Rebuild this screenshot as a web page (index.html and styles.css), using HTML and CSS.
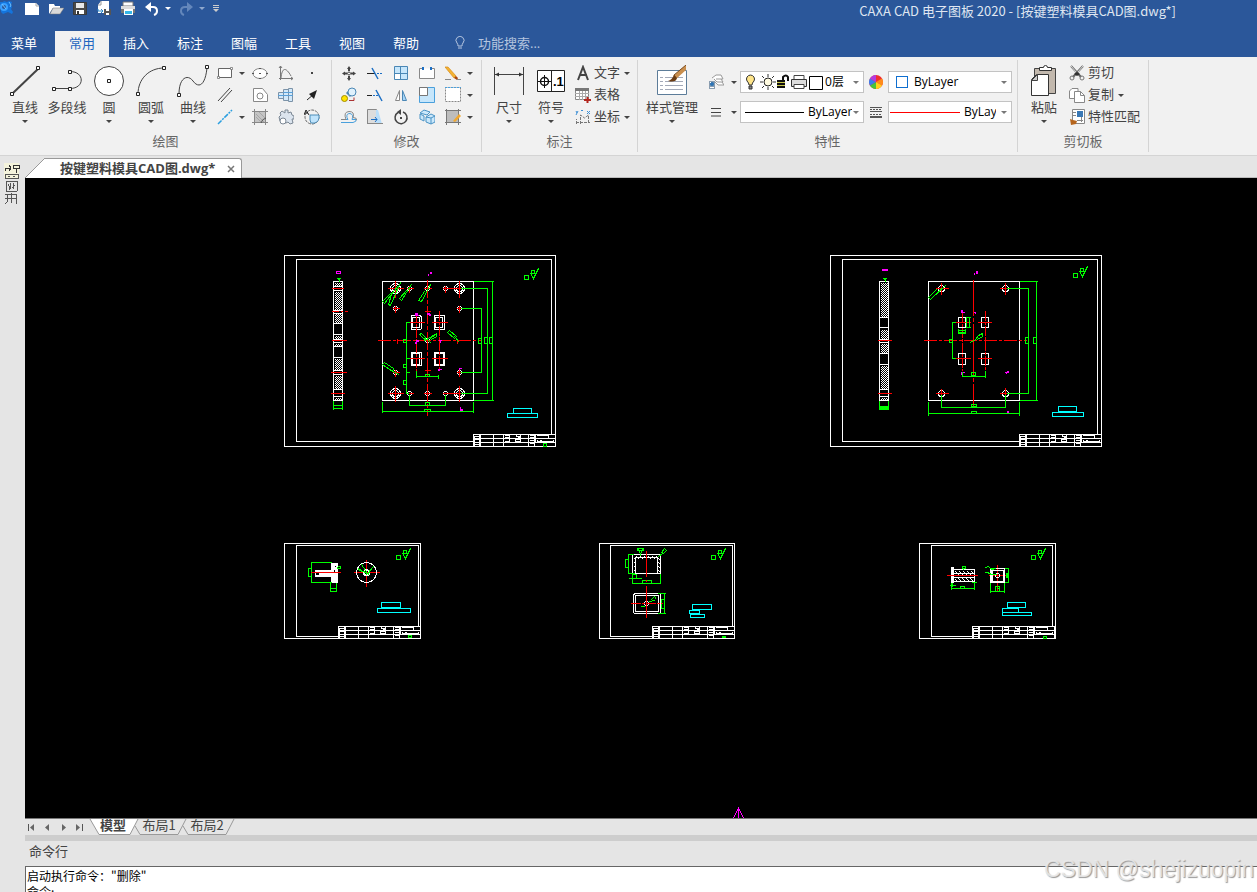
FILE: index.html
```html
<!DOCTYPE html>
<html lang="zh-CN">
<head>
    <meta charset="UTF-8">
    <meta name="viewport" content="width=device-width, initial-scale=1.0">
    <title>CAXA CAD 电子图板 2020</title>
    <link rel="stylesheet" href="styles.css">
</head>
<body>
    <svg class="defs" width="0" height="0" aria-hidden="true">
        <defs>
            <symbol id="caret" viewBox="0 0 8 8"><path d="M1 3h6L4 6z" fill="currentColor"/></symbol>
            <pattern id="hatch" width="2" height="2" patternUnits="userSpaceOnUse" patternTransform="translate(.5 .5)">
                <rect width="1" height="1" fill="#fff"/><rect x="1" y="1" width="1" height="1" fill="#fff"/>
            </pattern>
            <pattern id="hatch-wide" width="4" height="4" patternUnits="userSpaceOnUse" patternTransform="translate(.5 .5)">
                <path d="M0 0h2v1h1v1h1v1h-1v-1h-1v-1h-2zM0 3h1v1h-1z" fill="#fff"/>
            </pattern>
            <!-- title block shared by all sheets -->
            <g id="title-block">
                <rect class="w" width="82" height="12"/>
                <path class="w" d="M0 4h82M0 8h82M7 0v12M20 0v12M30 0v12M36 0v8M55 0v12M61 0v12M62 0v8M43 0v2h4v-2M42 5h5v2h-5zM64 5v2h16v-2M56 6h4"/>
                <path class="w" d="M1 1v11M6 0v12M1 2h5M1 5h5M1 10h5M31 1h5M31 3h5M31 7h5M56 1h4M56 3h4M56 9h4M63 1h12M75 0v4M66 6h2M44 3h3"/>
            </g>
            <g id="roughness" class="g">
                <path d="M0 6h4v4h-4zM7 1h3v3h-3zM6 4l3 5 5-10M7 4h5"/>
            </g>
        </defs>
    </svg>

    <header class="titlebar">
        <div class="quick-access">
            <svg class="app-logo" width="13" height="16" viewBox="0 0 13 16"><path d="M0 2h3l1-1 3 1 2-1 3 1-1 3 1 2-1 2 2 3-1 2-4-2-5 2-2-2z" fill="#1474dc"/><circle cx="4" cy="7" r="3" fill="#2b579a" stroke="#39a0ff" stroke-width="2"/><path d="M9 2l2 3-1 2M2 4l4 5" stroke="#6ec1ff" fill="none"/></svg>
            <button class="qa new" aria-label="新建"><svg width="16" height="16" viewBox="0 0 16 16"><path d="M1 3h11l3 3v9H1z" fill="#fff"/><path d="M12 3v3h3" fill="none" stroke="#aaa"/></svg></button>
            <button class="qa" aria-label="打开"><svg width="16" height="16" viewBox="0 0 16 16"><path d="M1 14V4h5l1 2h5v2H5z" fill="#fff"/><path d="M2 14l3-6h11l-4 6z" fill="#d9d9d9" stroke="#777" stroke-width=".5"/></svg></button>
            <button class="qa" aria-label="保存"><svg width="16" height="16" viewBox="0 0 16 16"><path d="M1.500 2.500h13v12h-13z" fill="#4a4a4a" stroke="#3a3a3a"/><path d="M4 3h8v5H4z" fill="#e8e8e8"/><path d="M4 10h8v4H4z" fill="#fff"/><path d="M5 11h2v3H5z" fill="#333"/></svg></button>
            <button class="qa" aria-label="另存为"><svg width="16" height="16" viewBox="0 0 16 16"><path d="M5 1h8v12H2V5z" fill="#fff"/><path d="M2 5h3V1" fill="none" stroke="#999"/><path d="M2 9v2h5M5 9l2 2-2 2" fill="none" stroke="#2a86c8"/><path d="M8 9h7v6H8z" fill="#555"/><path d="M10 9h3v2h-3zM10 13h3v2h-3z" fill="#fff"/></svg></button>
            <button class="qa" aria-label="打印"><svg width="16" height="16" viewBox="0 0 16 16"><path d="M3 2h10v4H3z" fill="#fff" stroke="#777"/><path d="M1 6h14v6H1z" fill="#ddd"/><path d="M1 9h14v4H1z" fill="#777"/><path d="M4 9h9v6H4z" fill="#fff"/><path d="M5 11h7v3H5z" fill="#35b6e8"/></svg></button>
            <button class="qa" aria-label="撤销"><svg width="16" height="16" viewBox="0 0 16 16"><path d="M4 7h5q4 0 4 4 0 3-3 4" fill="none" stroke="#fff" stroke-width="2"/><path d="M7 2v10L1 7z" fill="#fff"/></svg></button>
            <button class="qa-caret" aria-label="撤销列表"><svg width="8" height="8"><use href="#caret"/></svg></button>
            <button class="qa" aria-label="重做"><svg width="16" height="16" viewBox="0 0 16 16"><path d="M12 7H7q-4 0-4 4 0 3 3 4" fill="none" stroke="#6487bb" stroke-width="2"/><path d="M9 2v10l6-5z" fill="#6487bb"/></svg></button>
            <button class="qa-caret dim" aria-label="重做列表"><svg width="8" height="8"><use href="#caret"/></svg></button>
            <button class="qa-more" aria-label="自定义"><svg width="8" height="10" viewBox="0 0 8 10"><path d="M1 2.500h6M1 4.500h6" stroke="#ccc"/><path d="M1 6h6L4 9z" fill="#ccc"/></svg></button>
        </div>
        <div class="window-title">CAXA CAD 电子图板 2020 - [按键塑料模具CAD图.dwg*]</div>
    </header>

    <nav class="ribbon-tabs">
        <button class="ribbon-tab menu">菜单</button>
        <button class="ribbon-tab active">常用</button>
        <button class="ribbon-tab">插入</button>
        <button class="ribbon-tab">标注</button>
        <button class="ribbon-tab">图幅</button>
        <button class="ribbon-tab">工具</button>
        <button class="ribbon-tab">视图</button>
        <button class="ribbon-tab">帮助</button>
        <label class="search">
            <svg width="12" height="14" viewBox="0 0 12 14"><path d="M4 10Q4 8 3 7a4 4 0 1 1 6 0Q8 8 8 10zM4 12h4" fill="none" stroke="#b5c5df"/></svg>
            <input type="text" placeholder="功能搜索..." aria-label="功能搜索">
        </label>
    </nav>

    <div class="ribbon">
        <section class="group">
            <div class="group-body">
                <div class="large-row draw-row">
                    <button class="large"><svg width="32" height="32" viewBox="0 0 32 32"><path d="M4 28L29 4" class="ln2"/><path d="M1.500 27.500h3v3h-3zM27.500 1.500h3v3h-3z" class="node"/></svg><span>直线</span><svg class="caret" width="8" height="8"><use href="#caret"/></svg></button>
                    <button class="large"><svg width="32" height="32" viewBox="0 0 32 32"><path d="M3 23.500h15M19 6.500c15 0 15 17 0 17" class="ln"/><path d="M1.500 22.500h3v3h-3zM17.500 22.500h3v3h-3zM17.500 5.500h3v3h-3z" class="node"/></svg><span>多段线</span></button>
                    <button class="large"><svg width="32" height="32" viewBox="0 0 32 32"><circle cx="16" cy="16" r="14.500" fill="#fff" stroke="#444"/><path d="M14.500 14.500h3v3h-3z" class="node"/></svg><span>圆</span><svg class="caret" width="8" height="8"><use href="#caret"/></svg></button>
                    <button class="large"><svg width="32" height="32" viewBox="0 0 32 32"><path d="M3 29C3 14 14 3 29 3" class="ln"/><path d="M1.500 27.500h3v3h-3zM27.500 1.500h3v3h-3z" class="node"/></svg><span>圆弧</span><svg class="caret" width="8" height="8"><use href="#caret"/></svg></button>
                    <button class="large"><svg width="32" height="32" viewBox="0 0 32 32"><path d="M2 29C2 12 11 9 16 16S28 22 30 3" class="ln"/><path d="M.500 28.500h3v3h-3zM28.500.500h3v3h-3z" class="node"/></svg><span>曲线</span><svg class="caret" width="8" height="8"><use href="#caret"/></svg></button>
                </div>
                <div class="tools draw-tools">
                    <button class="tool" aria-label="矩形"><svg width="16" height="16" viewBox="0 0 16 16"><path d="M1.500 3.500h13v9h-13z" fill="#fff" stroke="#666"/><path d="M.500 11.500h2v2h-2zM13.500 2.500h2v2h-2z" fill="#fff" stroke="#666" stroke-width=".7"/></svg><svg class="caret" width="8" height="8"><use href="#caret"/></svg></button>
                    <button class="tool" aria-label="椭圆"><svg width="16" height="16" viewBox="0 0 16 16"><ellipse cx="8" cy="8.500" rx="7" ry="5" fill="#fff" stroke="#888"/><path d="M7 8h2v1H7zM0 8h2v1H0zM14 8h2v1h-2zM7 3h2v1H7zM7 13h2v1H7z" fill="#555"/></svg></button>
                    <button class="tool" aria-label="公式曲线"><svg width="16" height="16" viewBox="0 0 16 16"><path d="M2.500 1v14M1 13.500h14M1 3l1.500-2L4 3M13 12l2 1.500-2 1.500M3 13C4 2 8 2 13 11" fill="none" stroke="#777"/></svg></button>
                    <button class="tool" aria-label="点"><svg width="16" height="16" viewBox="0 0 16 16"><path d="M7 7h2v2H7z" fill="#444"/></svg></button>
                    <button class="tool" aria-label="平行线"><svg width="16" height="16" viewBox="0 0 16 16"><path d="M1 14L13 1M4 15L15 3" fill="none" stroke="#444"/></svg></button>
                    <button class="tool" aria-label="孔"><svg width="16" height="16" viewBox="0 0 16 16"><path d="M1.500 1.500h9l5 6v7h-14z" fill="#fff" stroke="#888"/><circle cx="8" cy="9" r="3" fill="none" stroke="#888"/></svg></button>
                    <button class="tool" aria-label="轴"><svg width="16" height="16" viewBox="0 0 16 16"><path d="M.500 5.500h5v6h-5zM5.500 2.500h5v11h-5zM10.500 1.500h4v13h-4z" fill="#d3e9fa" stroke="#7c93a8"/><path d="M0 8.500h15M5 5.500h10" stroke="#5aa0d8"/></svg></button>
                    <button class="tool" aria-label="箭头"><svg width="16" height="16" viewBox="0 0 16 16"><path d="M3 13L10 7" stroke="#222"/><path d="M13 3l-8 4 5 5z" fill="#222"/></svg></button>
                    <button class="tool" aria-label="中心线"><svg width="16" height="16" viewBox="0 0 16 16"><path d="M1 15L15 1" stroke="#2b9fe0" stroke-width="1.500" stroke-dasharray="5 1 2 1"/></svg><svg class="caret" width="8" height="8"><use href="#caret"/></svg></button>
                    <button class="tool" aria-label="填充"><svg width="16" height="16" viewBox="0 0 16 16"><path d="M3 3h11v11H3z" fill="#c4c4c4"/><path d="M2.500 0v16M13.500 0v16M0 2.500h16M0 13.500h16" fill="none" stroke="#888"/><path d="M4 8l5 5M4 5l8 8M7 3l6 6" stroke="#999" stroke-width=".7"/><path d="M9 14q1-4 5-5" fill="none" stroke="#555"/></svg></button>
                    <button class="tool" aria-label="齿轮"><svg width="16" height="16" viewBox="0 0 16 16"><path d="M2 4l2-2 3 2V1h3v3l3-1 1 3 2 1v3h-2l1 4-3 1-2-2-2 1-6-2-1-4 2-2z" fill="#dbe4ee" stroke="#7b8794"/><circle cx="5" cy="12" r="3" fill="#fff" stroke="#7b8794"/></svg></button>
                    <button class="tool" aria-label="局部放大"><svg width="16" height="16" viewBox="0 0 16 16"><circle cx="8" cy="8" r="7" fill="none" stroke="#666" stroke-dasharray="3 1"/><path d="M6 6h9v3q-1 6-8 5l-1-3z" fill="#bfe3fb" stroke="#4d8db8"/><path d="M0 6l2-5 3 5M1 4h3" fill="none" stroke="#222"/></svg></button>
                </div>
            </div>
            <div class="group-label">绘图</div>
        </section>

        <section class="group">
            <div class="group-body">
                <div class="tools modify-tools">
                    <button class="tool" aria-label="平移"><svg width="16" height="16" viewBox="0 0 16 16"><path d="M8 1l2 3H9v2H7V4H6zM8 16l-2-3h1v-2h2v2h1zM1 8.500l3-2v1h2v2H4v1zM15 8.500l-3 2v-1h-2v-2h2v-1z" fill="#444"/><circle cx="8" cy="8.500" r="1.500" fill="none" stroke="#444"/></svg></button>
                    <button class="tool" aria-label="裁剪"><svg width="16" height="16" viewBox="0 0 16 16"><path d="M0 8.500h8" stroke="#222"/><path d="M5 3l6 11" stroke="#1c6fc4" stroke-width="1.500"/><path d="M10 8.500h6" stroke="#1c6fc4" stroke-dasharray="2 1"/></svg></button>
                    <button class="tool" aria-label="阵列"><svg width="16" height="16" viewBox="0 0 16 16"><path d="M1.500 1.500h13v13h-13z" fill="#c6e6fb" stroke="#4a87b5"/><path d="M2 9h5v5H2z" fill="#fff"/><path d="M7.500 1v14M1 8.500h14" stroke="#4a87b5"/></svg></button>
                    <button class="tool" aria-label="打断"><svg width="16" height="16" viewBox="0 0 16 16"><path d="M4 3.500H.500v10h15v-10H12" fill="#fff" stroke="#888"/><path d="M3 2h2v3H3zM11 2h2v3h-2z" fill="#1c6fc4"/></svg></button>
                    <button class="tool" aria-label="删除"><svg width="16" height="16" viewBox="0 0 16 16"><path d="M0 2h3l8 9-2 2z" fill="#f5b433" stroke="#d58a17" stroke-width=".7"/><path d="M9 13l2-2 2 2-1 2z" fill="#a9480f"/><path d="M0 14.500h6M12 14.500h4" stroke="#888"/></svg><svg class="caret" width="8" height="8"><use href="#caret"/></svg></button>
                    <button class="tool" aria-label="平移复制"><svg width="16" height="16" viewBox="0 0 16 16"><path d="M6 5l4 4" stroke="#4a87b5" stroke-width="3"/><circle cx="11" cy="5" r="4" fill="#dff1fc" stroke="#4a87b5"/><circle cx="3.500" cy="11.500" r="3" fill="#ffe400" stroke="#a08a00"/><path d="M8 13.500h5v-3" fill="none" stroke="#a33" /></svg></button>
                    <button class="tool" aria-label="延伸"><svg width="16" height="16" viewBox="0 0 16 16"><path d="M0 8.500h5" stroke="#222"/><path d="M6 8.500h6" stroke="#1c6fc4" stroke-dasharray="2 1"/><path d="M9 3l6 11" stroke="#1c6fc4" stroke-width="1.500"/></svg></button>
                    <button class="tool" aria-label="镜像"><svg width="16" height="16" viewBox="0 0 16 16"><path d="M6.500 3.500v10h-4z" fill="#fff" stroke="#888"/><path d="M9.500 3.500v10h4z" fill="#a7d5f7" stroke="#4a87b5"/></svg></button>
                    <button class="tool" aria-label="缩放"><svg width="16" height="16" viewBox="0 0 16 16"><path d="M.500.500h15v15H.500z" fill="#c6e6fb" stroke="#4aa0dc"/><path d="M.500.500h8v8h-8z" fill="#fff" stroke="#777"/></svg></button>
                    <button class="tool" aria-label="拉伸"><svg width="16" height="16" viewBox="0 0 16 16"><path d="M.500.500h15v14H.500z" fill="#fff" stroke="#888" stroke-dasharray="2 1"/><path d="M0 .500h16" stroke="#4aa0dc" stroke-dasharray="2 1"/></svg><svg class="caret" width="8" height="8"><use href="#caret"/></svg></button>
                    <button class="tool" aria-label="等距线"><svg width="16" height="16" viewBox="0 0 16 16"><path d="M0 13.500h12q4-1 3-3h-4q2-5-2-6-4 0-3 4l1 2H1" fill="none" stroke="#4aa0dc"/><path d="M0 10.500h5Q2 3 8 2.500q6 0 4 6 4 0 4 3" fill="none" stroke="#888"/></svg></button>
                    <button class="tool" aria-label="过渡"><svg width="16" height="16" viewBox="0 0 16 16"><path d="M.500.500h9v14h-9z" fill="#ddd" stroke="#888"/><path d="M9 1h2l4 14H9z" fill="#b9defa"/><path d="M4 10.500h6M8 8l2 2.500L8 13" fill="none" stroke="#1c6fc4"/><path d="M0 14.500h16" stroke="#888"/></svg></button>
                    <button class="tool" aria-label="旋转"><svg width="16" height="16" viewBox="0 0 16 16"><path d="M5 3.500A6 6 0 1 0 10 3" fill="none" stroke="#444" stroke-width="1.500"/><path d="M8 0v6L4 3z" fill="#444"/><path d="M7 8h2v2H7z" fill="#444"/></svg></button>
                    <button class="tool" aria-label="分解"><svg width="16" height="16" viewBox="0 0 16 16"><path d="M1 4l4-3 6 2-3 3zM1 5l4 2v5l-4-2zM7 8l5-3 4 2v6l-4 2-5-2z" fill="#cbe8fb" stroke="#4a93c5"/><path d="M12 9v6M7 8l5 1 4-2" fill="none" stroke="#4a93c5"/></svg></button>
                    <button class="tool" aria-label="编辑填充"><svg width="16" height="16" viewBox="0 0 16 16"><path d="M2 2h11v11H2z" fill="#bdbdbd"/><path d="M1.500 0v16M13.500 0v16M0 1.500h16M0 13.500h16" stroke="#777"/><path d="M8 12l6-7 2 2-6 6z" fill="#f0a830"/></svg><svg class="caret" width="8" height="8"><use href="#caret"/></svg></button>
                </div>
            </div>
            <div class="group-label">修改</div>
        </section>

        <section class="group">
            <div class="group-body">
                <div class="large-row annot-row">
                    <button class="large"><svg width="32" height="32" viewBox="0 0 32 32"><path d="M1.500 2v28M30.500 2v28M2 9.500h28" class="ln"/><path d="M2 9.500l4-2v4zM30 9.500l-4-2v4z" fill="#333"/></svg><span>尺寸</span><svg class="caret" width="8" height="8"><use href="#caret"/></svg></button>
                    <button class="large"><svg width="32" height="32" viewBox="0 0 32 32"><path d="M2.500 5.500h27v21h-27zM16.500 5v21" fill="#fff" stroke="#222"/><circle cx="9.500" cy="16.500" r="4" fill="none" stroke="#111" stroke-width="1.500"/><path d="M3 16.500h13M9.500 10v13" stroke="#111"/><text x="18" y="21" class="tol">.1</text></svg><span>符号</span><svg class="caret" width="8" height="8"><use href="#caret"/></svg></button>
                </div>
                <div class="small-list annot-list">
                    <button class="small"><svg width="16" height="16" viewBox="0 0 16 16"><path d="M3 15L8 2l5 13M5 10h7" fill="none" stroke="#444" stroke-width="2"/></svg><span>文字</span><svg class="caret" width="8" height="8"><use href="#caret"/></svg></button>
                    <button class="small"><svg width="16" height="16" viewBox="0 0 16 16"><path d="M.500 1.500h13v11H.500z" fill="#fff" stroke="#888"/><path d="M0 1h14v3H0z" fill="#777"/><path d="M4.500 4v9M7.500 4v9M10.500 4v9M0 6.500h14M0 9.500h14" stroke="#aaa"/><path d="M9 13h7M12.500 10v6" stroke="#b3261e" stroke-width="2"/></svg><span>表格</span></button>
                    <button class="small"><svg width="16" height="16" viewBox="0 0 16 16"><path d="M5.500 15V6l4 3 4-3v9M1.500 15v-5M1 13.500h14" fill="none" stroke="#777" stroke-dasharray="3 1"/><path d="M1 2l1 2M3 2L1 6M6 1.500h2M12 2l3 3M15 2l-3 3" stroke="#3c8fd6"/></svg><span>坐标</span><svg class="caret" width="8" height="8"><use href="#caret"/></svg></button>
                </div>
            </div>
            <div class="group-label">标注</div>
        </section>

        <section class="group">
            <div class="group-body">
                <div class="large-row style-row">
                    <button class="large"><svg width="32" height="32" viewBox="0 0 32 32"><path d="M1.500 5.500h29v24h-29z" fill="#fff" stroke="#5c7c99"/><path d="M4 12.500h3M4 16.500h3M4 20.500h3M4 24.500h3M9 12.500h18M9 16.500h18M9 20.500h18M9 24.500h18" stroke="#a3a9b8"/><path d="M30 0v5L20 14l-3-3z" fill="#c98f4e"/><path d="M30 0L18 10l2 3" fill="none" stroke="#7a4a1d"/><path d="M18 10l3 3q-1 5-9 3 4-1 6-6z" fill="#6b3d14"/></svg><span>样式管理</span><svg class="caret" width="8" height="8"><use href="#caret"/></svg></button>
                </div>
                <div class="props">
                    <div class="prop-row">
                        <button class="tool layer" aria-label="图层"><svg width="16" height="16" viewBox="0 0 16 16"><path d="M4 4l4-3h5l2 4H8M6 5l3 3h6l-2-3M7 8l3 3h6l-2-3" fill="#fff" stroke="#999"/><path d="M1 7h6v8H1z" fill="#8a9db0"/><circle cx="4" cy="10" r="2" fill="#2d74b5"/><path d="M2 13.500h4M2 8.500h1" stroke="#fff"/></svg><svg class="caret" width="8" height="8"><use href="#caret"/></svg></button>
                        <div class="combo">
                            <svg width="84" height="18" viewBox="0 0 84 18">
                                <path d="M8 12q0-2-2-4a4 4 0 1 1 7 0q-2 2-2 4z" fill="#ffe58a" stroke="#333"/><path d="M8 13h3v3H8z" fill="#888" stroke="#333"/>
                                <circle cx="27" cy="9" r="4" fill="#fffbe0" stroke="#222"/><path d="M27 1v3M27 14v3M19 9h3M32 9h3M21 3l2 2M31 13l2 2M21 15l2-2M31 5l2-2" stroke="#333"/>
                                <path d="M42 8V4q3-3 5 0v4" fill="none" stroke="#111" stroke-width="2"/><path d="M36 7h8v8h-8z" fill="#111"/><path d="M36 9.500h8M36 12.500h8" stroke="#c9c94b"/>
                                <path d="M53 2.500h10v6H53z" fill="#fff" stroke="#444"/><path d="M50.500 6.500h15v7h-15z" fill="#ddd" stroke="#333"/><path d="M53 11.500h10v4H53z" fill="#fff" stroke="#444"/>
                                <path d="M68.500 3.500h13v13h-13z" fill="#fff" stroke="#000"/>
                            </svg>
                            <select aria-label="图层"><option>0层</option></select>
                            <svg class="caret" width="8" height="8"><use href="#caret"/></svg>
                        </div>
                        <button class="tool between" aria-label="颜色"><svg width="14" height="14" viewBox="0 0 14 14"><circle cx="7" cy="7" r="7" fill="#f03030"/><path d="M7 7l6-3.500a7 7 0 0 1 0 7z" fill="#ff8c1a"/><path d="M7 7l6 3.500A7 7 0 0 1 7 14z" fill="#ffd21a"/><path d="M7 7v7a7 7 0 0 1-6-3.500z" fill="#45c43c"/><path d="M7 7l-6 3.500a7 7 0 0 1 0-7z" fill="#3a7df0"/><path d="M7 7L1 3.500A7 7 0 0 1 7 0z" fill="#b43be0"/></svg></button>
                        <div class="combo">
                            <span class="swatch"></span>
                            <select aria-label="颜色"><option>ByLayer</option></select>
                            <svg class="caret" width="8" height="8"><use href="#caret"/></svg>
                        </div>
                    </div>
                    <div class="prop-row">
                        <button class="tool layer" aria-label="线宽"><svg width="16" height="16" viewBox="0 0 16 16"><path d="M3 4.500h10M3 8.500h10M3 12h10" stroke="#444"/></svg><svg class="caret" width="8" height="8"><use href="#caret"/></svg></button>
                        <div class="combo">
                            <span class="weight-line"></span>
                            <select aria-label="线宽"><option>ByLayer</option></select>
                            <svg class="caret" width="8" height="8"><use href="#caret"/></svg>
                        </div>
                        <button class="tool between" aria-label="线型"><svg width="14" height="14" viewBox="0 0 14 14"><path d="M1 2.500h12M1 6.500h12" stroke="#555"/><path d="M1 4.500h12M1 9.500h12" stroke="#555" stroke-dasharray="2 1"/><path d="M1 12h12" stroke="#555" stroke-width="2"/></svg></button>
                        <div class="combo">
                            <span class="type-line"></span>
                            <select class="narrow" aria-label="线型"><option>ByLayer</option></select>
                            <svg class="caret" width="8" height="8"><use href="#caret"/></svg>
                        </div>
                    </div>
                </div>
            </div>
            <div class="group-label">特性</div>
        </section>

        <section class="group">
            <div class="group-body">
                <div class="large-row paste-row">
                    <button class="large"><svg width="32" height="32" viewBox="0 0 32 32"><path d="M6.500 3.500h21v25h-21z" fill="#c2b8ad" stroke="#444"/><path d="M11.500 5.500v-3h4q0-2 2-2t2 2h4v3z" fill="#fff" stroke="#333"/><path d="M8.500 9.500h12v21h-17v-16z" fill="#fff" stroke="#333"/><path d="M9.500 9.500v6h-6z" fill="#ccc" stroke="#444"/></svg><span>粘贴</span><svg class="caret" width="8" height="8"><use href="#caret"/></svg></button>
                </div>
                <div class="small-list">
                    <button class="small"><svg width="16" height="16" viewBox="0 0 16 16"><path d="M2 1l10 11M14 1L4 12" stroke="#666" stroke-width="2"/><path d="M2 1l5 6M14 1L9 7" stroke="#ddd"/><path d="M5 9l3-2 3 2-3 2z" fill="#333"/><circle cx="3" cy="13" r="2" fill="none" stroke="#777"/><circle cx="13" cy="13" r="2" fill="none" stroke="#777"/></svg><span>剪切</span></button>
                    <button class="small"><svg width="16" height="16" viewBox="0 0 16 16"><path d="M3 1.500h6v10H.500V4z" fill="#fff" stroke="#888"/><path d="M5.500 4.500h6l4 4v7h-10z" fill="#fff" stroke="#888"/><path d="M11.500 4.500v4h4" fill="none" stroke="#888"/></svg><span>复制</span><svg class="caret" width="8" height="8"><use href="#caret"/></svg></button>
                    <button class="small"><svg width="16" height="16" viewBox="0 0 16 16"><path d="M3.500.500h12v14h-12z" fill="#fff" stroke="#888"/><path d="M8 2h6v6H8z" fill="#3a78b5"/><path d="M4 3.500h3M4 6.500h3M8 11.500h6M12.500 8v5" stroke="#888"/><path d="M1 10l3 1 4 1-1 3-5 1z" fill="#b5651d"/></svg><span>特性匹配</span></button>
                </div>
            </div>
            <div class="group-label">剪切板</div>
        </section>
    </div>

    <div class="workspace">
        <aside class="side-panel">
            <svg width="16" height="42" viewBox="0 0 16 42" shape-rendering="crispEdges"><path d="M0 0h15v15H0z" fill="#f4f3dc"/><path d="M1 8V5h5M5 2l2 3-2 3M9 2h6v3H9zM12 5v5" fill="none" stroke="#333"/><path d="M1 11h13v4H1zM4 13h2M9 13h2" fill="none" stroke="#555"/><path d="M2 18v10M13 18v10M2 18h11M2 28h11M4 21l3 5M7 20l-2 7M9 20v6M11 22l-3 3" fill="none" stroke="#555"/><path d="M1 31h12M1 35h12M3 31v8l-2 2M7 30v10M12 31v10" fill="none" stroke="#555"/></svg>
        </aside>
        <main class="document">
            <div class="doc-tabs">
                <svg class="slant" width="20" height="20" viewBox="0 0 20 20"><path d="M0 20L19.500 0H20v20z" fill="#fff"/><path d="M0 20L20 0" stroke="#999"/></svg>
                <div class="doc-tab">
                    <span>按键塑料模具CAD图.dwg*</span>
                    <button class="close" aria-label="关闭"><svg width="8" height="8" viewBox="0 0 8 8"><path d="M1 1l6 6M7 1L1 7" stroke="#777" stroke-width="1.500"/></svg></button>
                </div>
            </div>

            <div class="canvas">
                <svg class="drawing" width="100%" height="100%" shape-rendering="crispEdges">
                    <!-- sheet 1: cavity plate -->
                    <g transform="translate(255.500 72.500)">
                        <rect class="w" x="4" y="5" width="271" height="191"/>
                        <path class="w" d="M193 191H16V9h255v175"/>
                        <use href="#title-block" x="193" y="184"/>
                        <path class="g" d="M263 193h3v3h-3z"/>
                        <use href="#roughness" x="244" y="19"/>
                        <path class="hatch" d="M54 32h8v4h-8zM54 41h8v18h-8zM54 63h8v10h-8zM54 85h8v3h-8zM54 93h8v3h-8zM54 108h8v12h-8zM54 125h8v14h-8zM54 147h8v3h-8z"/>
                        <path class="w" d="M53 31h9v119h-9zM53 36h9M53 40h9M53 60h9M53 63h9M53 73h9M53 84h9M53 89h9M53 92h9M53 96h9M53 107h9M53 120h9M53 124h9M53 139h9M53 146h9"/>
                        <path class="g" d="M53 150v9M62 150v9M53 155h9M53 158h9M56 28h4M57 29h2v2"/>
                        <path class="r" d="M51 38h12M51 61h7m2 0h2m2 0h3M51 90h15M50 122h16M50 143h14"/>
                        <path class="m" d="M56 21h4v2h-4z"/>
                        <rect class="w" x="102" y="31" width="91" height="119"/>
                        <g class="w">
                            <circle cx="115" cy="38" r="5"/><circle cx="115" cy="38" r="3"/><circle cx="179" cy="38" r="5"/><circle cx="179" cy="38" r="3"/>
                            <circle cx="115" cy="143" r="5"/><circle cx="115" cy="143" r="3"/><circle cx="179" cy="143" r="5"/><circle cx="179" cy="143" r="3"/>
                            <circle cx="129" cy="38" r="2"/><circle cx="147" cy="38" r="2"/><circle cx="165" cy="38" r="2"/>
                            <circle cx="129" cy="143" r="2"/><circle cx="147" cy="143" r="2"/><circle cx="165" cy="143" r="2"/>
                            <circle cx="115" cy="58" r="2"/><circle cx="179" cy="58" r="2"/><circle cx="115" cy="122" r="2"/><circle cx="179" cy="122" r="2"/><circle cx="147" cy="90" r="2"/>
                            <path d="M131 65h9l1 2v11l-1 1h-9zM132 67h7v10h-7zM154 65h10v14h-10zM155 67h7v10h-7zM131 102h10v13h-10zM132 103h7v11h-7zM154 102h10v13h-10zM155 103h8v11h-8z"/>
                        </g>
                        <g class="r">
                            <path d="M147 29v136" stroke-dasharray="18 2 4 2"/><path d="M97 90h103" stroke-dasharray="13 2 3 2"/>
                            <path d="M136 62v58M159 60v60" stroke-dasharray="10 1 3 1"/>
                            <path d="M129 72h15M151 72h16M129 108h15M151 108h16"/>
                            <path d="M107 38h16M115 30v17M126 38h7M129 35v7M143 38h8M162 38h16M165 35v7M172 38h15M179 30v17M112 58h7M115 55v7M176 58h7M179 55v7M112 122h7M115 119v7M176 122h7M179 119v7M107 143h16M115 135v16M126 143h7M143 143h8M162 143h25M179 135v16M144 61h6M144 120h6M117 88v5M177 88v5"/>
                        </g>
                        <g class="g">
                            <path d="M193 31h20M212 31v119M193 150h20M180 38h27v105h-27M180 58h21v64h-21M198 88h3v5h-3zM204 87h3v6h-3zM209 87h3v6h-3z"/>
                            <path d="M126 72v71M125 72h4M125 108h4M125 122h4M125 143h3M123 89h3v3h-3zM123 114h3v3h-3zM123 130h3v4h-3z"/>
                            <path d="M136 120v7M136 126h22M158 124v4M145 124h4v2h-4zM129 144v11h36v-11M145 152h4v3h-4zM102 151v11M102 161h91M193 151v11M144 159h6v2h-6z"/>
                            <path d="M120 32l-10 23-2-1 3-10M117 36l-13 17-2-2 8-8M131 34l-10 16-2-2 7-8M150 34l-9 17-3-1 6-9M102 114l2-2 9 6-1 3zM112 121l7 3M139 84l2-1 4 4-1 2zM144 90l4-2 8-5M150 88l6-5v3l-5 3M147 89l4 4M167 82l2-2 7 6-2 2zM174 86l5 6"/>
                        </g>
                        <path class="mf" d="M149 21h2v2h-2zM147 23h1v2h-1zM134 62h3v2h1v1h-4zM146 62h3v1h1v2h-2v-1h-2zM134 91h2v2h-2zM135 89h3v2h-3zM158 89h3v1h-1v2h-1v-2h-1zM157 118h4v1h-2v1h-2zM178 117h3v1h-2v1h-1zM179 156h1v2h2v2h-3z"/>
                        <path class="c" d="M233 158h18v5h-18zM227 163h30v4h-30z"/>
                    </g>

                    <!-- sheet 2: backing plate -->
                    <g transform="translate(801.500 72.500)">
                        <rect class="w" x="4" y="5" width="271" height="191"/>
                        <path class="w" d="M193 191H16V9h255v175"/>
                        <use href="#title-block" x="193" y="184"/>
                        <use href="#roughness" x="247" y="17"/>
                        <path class="hatch" d="M54 32h8v35h-8zM54 79h8v10h-8zM54 93h8v10h-8zM54 115h8v23h-8zM54 147h8v3h-8z"/>
                        <path class="w" d="M53 31h9v119h-9zM53 67h9M53 77h9M53 89h9M53 92h9M53 103h9M53 114h9M53 139h9M53 146h9"/>
                        <path class="g" d="M53 150v9h9v-9M53 156h9v1h-9zM53 158h9M56 28h4M57 29h2v2"/>
                        <path class="r" d="M51 90h14M51 143h14"/>
                        <path class="mf" d="M55 18h6v2h-6zM149 20h2v3h-2zM147 22h1v2h-1zM134 59h2v2h2v1h-4zM146 60h1v1h2v2h-1v-1h-2zM134 121h4v1h-2v2h-2zM178 121h2v-1h2v2h-2v1h-1v-1h-1zM180 160h2v3h-2z"/>
                        <rect class="w" x="102" y="31" width="91" height="119"/>
                        <g class="w">
                            <circle cx="115" cy="38" r="3"/><circle cx="179" cy="38" r="3"/><circle cx="115" cy="143" r="3"/><circle cx="179" cy="143" r="3"/>
                            <path d="M132 67h7v10h-7zM155 67h7v10h-7zM132 103h7v11h-7zM155 103h7v11h-7z"/>
                        </g>
                        <g class="r">
                            <path d="M147 29v60M147 89v68" stroke-dasharray="36 2 4 2"/><path d="M97 90h103" stroke-dasharray="13 2 3 2"/>
                            <path d="M136 62v58M159 60v60" stroke-dasharray="10 1 3 1"/>
                            <path d="M129 72h15M151 72h14M129 108h15M151 108h14M109 38h13M115 32v12M173 38h13M179 32v12M109 143h13M115 138v10M173 143h13M179 137v12"/>
                        </g>
                        <g class="g">
                            <path d="M193 31h18M210 31v119M193 150h18M180 38h22v105h-22M199 87h3v6h-3zM207 87h3v6h-3z"/>
                            <path d="M125 72h4M126 72v36M125 108h4M123 89h3v3h-3zM132 78v5h7v-5M132 80h7M132 82h7M140 67h3v10h-3zM139 67h5M139 77h5"/>
                            <path d="M136 121v5h22M159 120v7M145 122h4v3h-4zM115 144v13h64v-13M145 154h5v2h-5zM102 151v14M102 163h91M193 151v14M145 161h5v2h-5z"/>
                            <path d="M120 34l-16 15-2-2 8-8M144 92l5-3 3-4 4-2v3l-5 3"/>
                        </g>
                        <path class="c" d="M232 156h18v5h-18zM226 162h31v4h-31z"/>
                    </g>

                    <!-- sheet 3: sprue bush -->
                    <g transform="translate(255.500 362.500)">
                        <rect class="w" x="4" y="3" width="136" height="95"/>
                        <path class="w" d="M58 96H16V5h122v81"/>
                        <use href="#title-block" x="58" y="86"/>
                        <path class="g" d="M128 95h3v2h-3z"/>
                        <use href="#roughness" x="116" y="9"/>
                        <path class="wf" d="M50 22h7v20h-7zM34 29h16v7H34z"/>
                        <path fill="#000" d="M35 31h3v3h-3zM53 29h1v2h-1zM54 25h1v1h-1z"/>
                        <path class="g" d="M51 22H31v20h20M28 28h3v8h-3zM50 42v9h6v-9M50 48h6M56 29l2-3h2v2h-4"/>
                        <path class="r" d="M30 32h30M73 32h26M86 19v27"/>
                        <circle class="w" cx="86" cy="32" r="10"/><circle class="w" cx="86" cy="32" r="3"/><circle class="w" cx="86" cy="32" r="2"/>
                        <path class="g" d="M78 29l4 2-4-3zM81 24l6 9 6-7M83 31l6 3M86 34l4-3"/>
                        <path class="c" d="M101 62h19v5h-19zM97 68h33v4H97z"/>
                    </g>

                    <!-- sheet 4: key cap -->
                    <g transform="translate(570.500 362.500)">
                        <rect class="w" x="4" y="3" width="135" height="95"/>
                        <path class="w" d="M57 96H15V5h122v81"/>
                        <use href="#title-block" x="57" y="86"/>
                        <path class="g" d="M127 96h3v1h-3z"/>
                        <use href="#roughness" x="116" y="9"/>
                        <path class="hatch-wide" d="M38 15h27v3H40v15h-2zM62 18h3v15h-3z"/>
                        <path class="w" d="M37 14h28v19h-28zM40 17h22v16h-22zM38 54l2-1h24l1 1v18l-1 1H39l-1-1zM40 55h23v16H40z"/>
                        <path class="g" d="M32 14h6M33 14v19h6M30 19h3v8h-3zM37 33v10h28v-10M47 40h9v3h-9zM42 8h6v2h-6zM43 9l2 5 2-5M63 16l4-3M66 12l3-4 2 2-3 3zM33 38h13M37 34h4v4"/>
                        <path class="g" d="M62 53h8M69 53v20M62 73h8M66 59h3v9h-3zM45 66h4l5-5 6-1M55 60l4-4 2 3"/>
                        <circle class="w" cx="51" cy="63" r="2"/>
                        <path class="r" d="M51 10v26m0 3v2m0 4v32" /><path class="r" d="M35 63h32" stroke-dasharray="10 1 3 1"/>
                        <path class="c" d="M97 64h19v5H97zM94 70h10v3H94zM95 74h14v3H95z"/>
                    </g>

                    <!-- sheet 5: insert -->
                    <g transform="translate(890.500 362.500)">
                        <rect class="w" x="4" y="3" width="136" height="95"/>
                        <path class="w" d="M57 96H16V5h121v81"/>
                        <use href="#title-block" x="57" y="86"/>
                        <path class="g" d="M128 96h3v2h-3z"/>
                        <use href="#roughness" x="116" y="9"/>
                        <path class="hatch-wide" d="M39 30h20v4H39zM39 36h20v5H39z"/>
                        <path class="w" d="M36 27h2v15h-2zM37 27v15M38 29h21v12H38zM38 33h20M38 37h20"/>
                        <path class="r" d="M31 35h31M73 35h19M82 24v27"/>
                        <path class="g" d="M36 42v7M36 48h23M59 41v8M45 46h4v2h-4zM47 26h3v2h-3zM48 27v2M34 45h6M37 42v4M56 42h5"/>
                        <path class="w" d="M75 28h14v14H75zM77 30h11v11H77zM76 28v14"/><circle class="w" cx="82" cy="35" r="2"/>
                        <path class="g" d="M75 42v10M75 51h14M89 42v10M80 46h4v5h-4zM81 48h3M89 28h4v14h-4M91 33h1v4h-1zM69 32h3l4 2h5M70 27l3-1 3 3h2M75 28h5"/>
                        <path class="c" d="M92 62h18v5H92zM87 68h16v4H87zM87 72h29v3H87z"/>
                    </g>

                    <!-- origin mark -->
                    <path class="m" d="M713.500 631v9M708.500 640l5-10 5 10"/>
                </svg>
            </div>

            <div class="layout-bar">
                <div class="layout-nav">
                    <button aria-label="首个"><svg width="8" height="8" viewBox="0 0 8 8"><path d="M1.500 1v7" stroke="#555"/><path d="M7 1v7L3 4.500z" fill="#666"/></svg></button>
                    <button aria-label="上一个"><svg width="8" height="8" viewBox="0 0 8 8"><path d="M6 1v7L2 4.500z" fill="#666"/></svg></button>
                    <button aria-label="下一个"><svg width="8" height="8" viewBox="0 0 8 8"><path d="M3 1v7l4-3.500z" fill="#666"/></svg></button>
                    <button aria-label="末个"><svg width="8" height="8" viewBox="0 0 8 8"><path d="M1 1v7l4-3.500z" fill="#666"/><path d="M7.500 1v7" stroke="#555"/></svg></button>
                </div>
                <button class="layout-tab active"><svg width="48" height="16" viewBox="0 0 48 16"><path d="M0 0l9 15.500h31L48 0" fill="#fff" stroke="#999"/></svg><span>模型</span></button>
                <button class="layout-tab"><svg width="48" height="16" viewBox="0 0 48 16"><path d="M-3 7l5 8.500h38L48 0" fill="none" stroke="#999"/></svg><span>布局1</span></button>
                <button class="layout-tab"><svg width="48" height="16" viewBox="0 0 48 16"><path d="M-3 7l5 8.500h38L48 0" fill="none" stroke="#999"/></svg><span>布局2</span></button>
            </div>

            <section class="command">
                <h2>命令行</h2>
                <div class="console">
                    <p>启动执行命令："删除"</p>
                    <p>命令:</p>
                </div>
            </section>
        </main>
    </div>
    <div class="watermark">CSDN @shejizuopin</div>
</body>
</html>
```

FILE: styles.css
```css
* {
    margin: 0;
    padding: 0;
    box-sizing: border-box;
}

body {
    display: flex;
    flex-direction: column;
    height: 100vh;
    overflow: hidden;
    position: relative;
    background: #e5e5e5;
    color: #444;
    font-family: "Open Sans", "Noto Sans CJK SC", sans-serif;
    font-size: 13px;
    line-height: 18px;
}

button,
input,
select {
    font: inherit;
    color: inherit;
    background: none;
    border: none;
    outline: none;
}

button {
    cursor: pointer;
}

svg {
    display: block;
    flex-shrink: 0;
}

.defs {
    position: absolute;
}

/* title bar */
.titlebar {
    display: flex;
    justify-content: space-between;
    height: 31px;
    flex-shrink: 0;
    background: #2b579a;
    color: #dfe6f1;
}

.quick-access {
    display: flex;
    align-items: center;
    height: 16px;
    gap: 8px;
}

.qa.new {
    margin-left: 3px;
}

.qa-caret {
    margin: 0 -2px 0 -4px;
    color: #fff;
}

.qa-caret.dim {
    color: #8fa8cd;
}

.window-title {
    padding: 2px 81px 0 0;
    font-family: "Noto Sans CJK SC", sans-serif;
}

/* ribbon tabs */
.ribbon-tabs {
    display: flex;
    height: 26px;
    flex-shrink: 0;
    background: #2b579a;
    color: #fff;
}

.ribbon-tab {
    width: 54px;
    padding-bottom: 2px;
    text-align: center;
}

.ribbon-tab.menu {
    width: 48px;
    margin-right: 7px;
}

.ribbon-tab.active {
    background: #f1f1f1;
    color: #1e66c0;
}

.search {
    display: flex;
    align-items: center;
    gap: 12px;
    margin-left: 21px;
    padding-bottom: 2px;
    color: #b5c5df;
}

.search input {
    width: 120px;
}

.search input::placeholder {
    color: #b5c5df;
    opacity: 1;
}

/* ribbon */
.ribbon {
    display: flex;
    height: 99px;
    flex-shrink: 0;
    padding: 3px 0;
    background: #f1f1f1;
    border-bottom: 1px solid #d4d4d4;
}

.group {
    display: flex;
    flex-direction: column;
    justify-content: space-between;
    border-right: 1px solid #d4d4d4;
}

.group-body {
    display: flex;
    padding-top: 2px;
}

.group-label {
    height: 20px;
    text-align: center;
    color: #666;
}

.large-row {
    display: flex;
}

.large {
    display: flex;
    flex-direction: column;
    align-items: center;
    min-width: 42px;
    padding: 3px 1px 0;
}

.large span {
    line-height: 20px;
}

.caret {
    color: #444;
}

.draw-row {
    padding-left: 4px;
}

.annot-row {
    padding: 0 3px 0 6px;
}

.style-row {
    padding: 0 9px 0 7px;
}

.paste-row {
    padding: 0 4px 0 5px;
}

.tools {
    display: grid;
    grid-auto-rows: 22px;
}

.draw-tools {
    grid-template-columns: 35px 26px 26px 26px;
    padding: 0 1px 0 3px;
}

.modify-tools {
    grid-template-columns: 26px 26px 26px 26px 36px;
    padding-left: 9px;
}

.tool {
    display: flex;
    align-items: center;
    gap: 5px;
}

.small-list {
    display: flex;
    flex-direction: column;
    padding-right: 8px;
}

.annot-list {
    padding-right: 6px;
}

.small {
    display: flex;
    align-items: center;
    gap: 3px;
    height: 22px;
}

.small span {
    padding-bottom: 2px;
}

/* properties */
.props {
    display: flex;
    flex-direction: column;
    gap: 8px;
    padding: 9px 5px 0 0;
}

.prop-row {
    display: flex;
    align-items: center;
}

.layer {
    width: 32px;
    gap: 6px;
}

.between {
    width: 24px;
    justify-content: center;
}

.combo {
    display: flex;
    align-items: center;
    width: 124px;
    height: 22px;
    padding-right: 3px;
    overflow: hidden;
    background: #fff;
    border: 1px solid #c3c3c3;
}

.combo select {
    flex: 1;
    min-width: 0;
    appearance: none;
    color: #000;
    font-size: 12px;
}

.combo select.narrow {
    margin-right: 4px;
}

.combo .caret {
    color: #777;
}

.swatch {
    width: 12px;
    height: 12px;
    margin: 0 6px 0 7px;
    border: 1px solid #0f6fd0;
}

.weight-line {
    width: 59px;
    margin: 0 4px;
    border-top: 1px solid #000;
}

.type-line {
    width: 70px;
    margin: 0 4px 0 1px;
    border-top: 1px solid #f00;
}

/* workspace */
.workspace {
    display: flex;
    flex: 1;
    min-height: 0;
}

.side-panel {
    width: 25px;
    flex-shrink: 0;
    padding: 7px 0 0 4px;
}

.document {
    display: flex;
    flex-direction: column;
    flex: 1;
    min-width: 0;
}

.doc-tabs {
    display: flex;
    align-items: flex-end;
    height: 22px;
    flex-shrink: 0;
    border-bottom: 1px solid #bbb;
}

.slant {
    margin-bottom: -1px;
}

.doc-tab {
    display: flex;
    align-items: center;
    gap: 12px;
    height: 20px;
    margin-bottom: -1px;
    padding: 0 6px 0 15px;
    background: #fff;
    border: solid #999;
    border-width: 1px 1px 0 0;
    border-top-right-radius: 3px;
    font-weight: bold;
}

.doc-tab span {
    padding-bottom: 2px;
}

/* drawing area */
.canvas {
    flex: 1;
    min-height: 0;
    background: #000;
}

.w,
.g,
.r,
.m,
.c {
    fill: none;
}

.w { stroke: #fff; }
.g { stroke: #0f0; }
.r { stroke: #f00; }
.m { stroke: #f0f; }
.c { stroke: #0ff; }
.wf { fill: #fff; }
.mf { fill: #f0f; }
.hatch { fill: url(#hatch); }
.hatch-wide { fill: url(#hatch-wide); }

.ln {
    fill: none;
    stroke: #444;
}

.ln2 {
    stroke: #444;
    stroke-width: 2;
}

.node {
    fill: #fff;
    stroke: #222;
}

.tol {
    fill: #000;
    font: bold 13px "Liberation Sans", sans-serif;
}

/* layout tabs */
.layout-bar {
    display: flex;
    height: 17px;
    flex-shrink: 0;
    border-top: 1px solid #777;
    font-family: "Noto Sans CJK SC", sans-serif;
}

.layout-nav {
    display: flex;
    align-items: center;
    gap: 8px;
    padding: 0 7px 0 2px;
}

.layout-tab {
    display: flex;
    justify-content: center;
    position: relative;
    width: 48px;
    height: 16px;
    padding-right: 6px;
    line-height: 12px;
}

.layout-tab svg {
    position: absolute;
    top: 0;
    left: 0;
    overflow: visible;
}

.layout-tab span {
    position: relative;
}

.layout-tab.active {
    padding-right: 2px;
    font-weight: bold;
}

/* command line */
.command {
    height: 57px;
    flex-shrink: 0;
    border-top: 6px solid #cdcdcd;
}

.command h2 {
    height: 25px;
    padding: 1px 4px;
    font-size: 13px;
    font-weight: normal;
}

.console {
    height: 26px;
    padding: 1px;
    overflow: hidden;
    background: #fff;
    border: solid #666;
    border-width: 1px 0 0 1px;
    color: #000;
    font: 12px/16px "Noto Sans CJK SC", sans-serif;
}

.watermark {
    position: absolute;
    right: 3px;
    bottom: 9px;
    color: rgba(235, 235, 235, 0.85);
    font: 23px/28px "Liberation Sans", sans-serif;
    text-shadow: 1px 1px 1px #999;
}
```
